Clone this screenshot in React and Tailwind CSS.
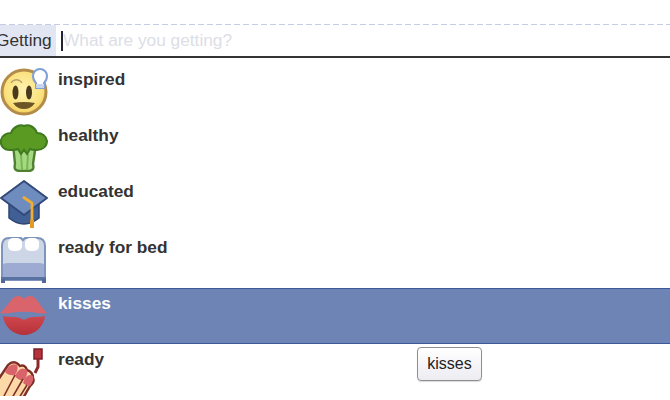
const Smile = () => (
  <svg width="48" height="48" viewBox="0 0 48 48">
    <defs>
      <radialGradient id="sm" cx="0.5" cy="0.45" r="0.55"><stop offset="0" stopColor="#fff2b0" /><stop offset="0.75" stopColor="#fbe27e" /><stop offset="1" stopColor="#f3cc5c" /></radialGradient>
    </defs>
    <circle cx="24" cy="24" r="22" fill="url(#sm)" stroke="#b48c4a" strokeWidth="3" />
    <path d="M11 15 a6.5 7 0 0 1 11 0" fill="none" stroke="#b8a468" strokeWidth="1.3" />
    <ellipse cx="15.5" cy="24.5" rx="3" ry="7" fill="#4a3a1c" />
    <ellipse cx="29" cy="24.5" rx="3" ry="7" fill="#4a3a1c" />
    <path d="M13 35 Q24 33 35 35 Q31 41 24 41 Q17 41 13 35Z" fill="#6e5526" />
    <path d="M36 15 Q33 12 33 8 A7 7 0 0 1 47 8 Q47 12 44 15 V20 H36Z" fill="#fff" stroke="#7f9fd6" strokeWidth="2" />
    <path d="M36 16h8v4h-8z" fill="#c6d4ee" />
  </svg>
);
const Broccoli = () => (
  <svg width="48" height="48" viewBox="0 0 48 48">
    <path d="M13 20 L15 40 Q13 47 20 47 H28 Q35 47 33 40 L36 20Z" fill="#a6d884" stroke="#4f7f30" strokeWidth="2.4" />
    <path d="M21 30 L22 46 M28 30 L27 46" stroke="#78b652" strokeWidth="2" fill="none" />
    <path d="M10 26 C3 26 0 21 1 16 C2 11 7 9 11 9 C13 3 20 0 24 2 C29 0 35 3 37 9 C42 9 46 12 47 17 C47 22 43 26 37 26 C34 26 32 26 30 25 L27 30 L24 26 L21 30 L18 25 C16 26 13 26 10 26Z" fill="#5a9a22" stroke="#3f7a1e" strokeWidth="2" />
  </svg>
);
const Cap = () => (
  <svg width="48" height="48" viewBox="0 0 48 48">
    <path d="M9 23 V38 Q24 50 39 38 V23Z" fill="#3f5f95" stroke="#2f4470" strokeWidth="1.5" />
    <path d="M24 1 L47 18 L24 35 L1 18Z" fill="#6e8cbd" stroke="#33497a" strokeWidth="2" strokeLinejoin="round" />
    <path d="M23 17 L32 23 V42" fill="none" stroke="#f2ac30" strokeWidth="2.8" />
    <path d="M30 40h4v8h-4z" fill="#e49a20" />
  </svg>
);
const Bed = () => (
  <svg width="48" height="48" viewBox="0 0 48 48">
    <path d="M2 44 V10 Q2 2 9 2 H21 L23 4 L25 2 H37 Q45 2 45 10 V44Z" fill="#cdd6e6" stroke="#7d94bd" strokeWidth="2" />
    <path d="M3 29 Q3 27 8 27 H39 Q44 27 44 29 V41 H3Z" fill="#9dabd3" />
    <rect x="8" y="2" width="14" height="13" rx="5" fill="#fff" />
    <rect x="25" y="2" width="14" height="13" rx="5" fill="#fff" />
    <rect x="1" y="41" width="45" height="3" fill="#5873a2" />
    <rect x="1" y="43" width="4" height="4" fill="#50699a" />
    <rect x="42" y="43" width="4" height="4" fill="#50699a" />
  </svg>
);
const Lips = () => (
  <svg width="48" height="48" viewBox="0 0 48 48">
    <defs>
      <linearGradient id="lp" x1="0" y1="0" x2="0" y2="1"><stop offset="0" stopColor="#d0474e" /><stop offset="1" stopColor="#b5313a" /></linearGradient>
    </defs>
    <path d="M0 21 C8 15 11 4 18 4 C21 4 23 6 24 7 C25 6 27 4 30 4 C37 4 40 15 47 21 C40 23 32 19 24 20 C16 19 8 23 0 21Z" fill="#d9646c" />
    <path d="M3 24 C9 26 16 23 24 28 C32 23 39 26 45 24 C44 35 34 43 24 43 C14 43 4 35 3 24Z" fill="url(#lp)" />
  </svg>
);
const Nails = () => (
  <svg width="48" height="48" viewBox="0 0 48 48">
    <path d="M-2 32 L8 17 Q13 12 18 16 L20 18 Q25 16 27 22 Q33 24 33 30 Q35 34 30 38 L22 52 H-2Z" fill="#fdd9a8" stroke="#7e2f26" strokeWidth="2.4" />
    <path d="M5 24 Q10 14 17 17 Q19 21 15 27 Q9 28 5 24Z M15 28 Q20 17 27 22 Q28 27 24 32 Q18 33 15 28Z M23 35 Q27 24 33 28 Q34 33 30 38 Q26 38 23 35Z" fill="#d9636a" />
    <path d="M4 48 L15 27 M12 50 L23 31 M19 50 L27 37" stroke="#7e2f26" strokeWidth="1.6" fill="none" />
    <rect x="34" y="1" width="8" height="10" fill="#b5323a" stroke="#7a2228" strokeWidth="1.5" />
    <path d="M38 11 V19 L35 25" fill="none" stroke="#8c2a2a" strokeWidth="3" />
  </svg>
);

const rows = [
  ["inspired", <Smile />],
  ["healthy", <Broccoli />],
  ["educated", <Cap />],
  ["ready for bed", <Bed />],
  ["kisses", <Lips />, true],
  ["ready", <Nails />],
];

export default function App() {
  return (
    <div className="relative w-[670px] h-[400px] overflow-hidden bg-white font-['Liberation_Sans',Arial,sans-serif]">
      <div className="pt-6">
        <div className="h-[1px] bg-[repeating-linear-gradient(90deg,#c5cbe2_0_6px,transparent_6px_9px)]" />
        <div className="flex h-[33px] items-stretch border-b-2 border-[#333333]">
          <div className="w-[56px] bg-[#e2e6f3] overflow-hidden shrink-0 flex items-center text-[17.3px] text-[#333333]">
            <span className="-ml-[4px] pt-[1px]">Getting</span>
          </div>
          <div className="flex items-center pl-[5px]">
            <div className="w-[2px] h-[20px] bg-[#222233]" />
            <span className="text-[17.3px] pt-[1px] text-[#dcdee6]">What are you getting?</span>
          </div>
        </div>
      </div>
      <div className="pt-[6px]">
        {rows.map(([label, icon, active]) => (
          <div
            key={label}
            className={`h-[56px] flex items-start ${active ? "bg-[#6d84b4] border-y border-[#3b5998] text-white" : "text-[#333333]"}`}
          >
            <div className={`w-[48px] h-[48px] shrink-0 ${active ? "mt-[3px]" : "mt-[4px]"}`}>{icon}</div>
            <span className={`ml-[10px] text-[17.3px] font-bold leading-[18px] ${active ? "mt-[5px]" : "mt-[6px]"}`}>{label}</span>
          </div>
        ))}
      </div>
      <div className="absolute left-[417px] top-[347px] w-[65px] h-[34px] flex items-center justify-center rounded-[4px] border border-[#8f8f8f] bg-gradient-to-b from-white to-[#ececf2] text-[16px] text-[#222222] shadow-[0_1px_1px_rgba(0,0,0,0.15)]">
        kisses
      </div>
    </div>
  );
}
